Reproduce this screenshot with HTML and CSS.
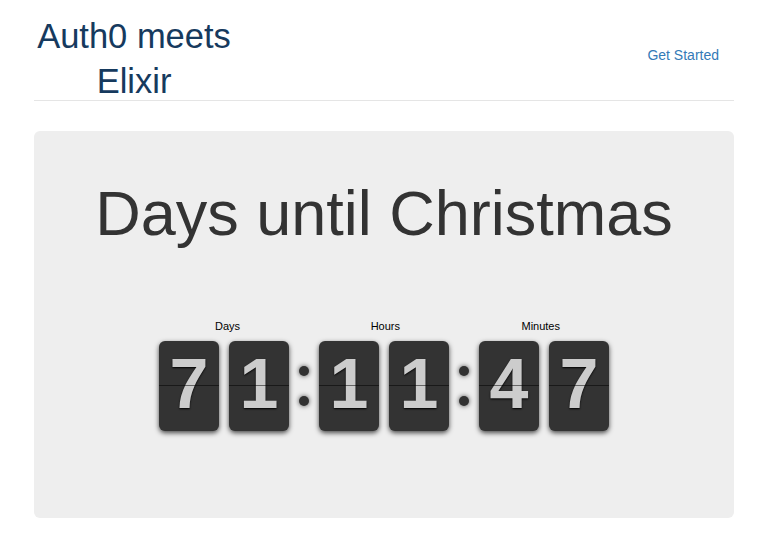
FILE: index.html
```html
<!DOCTYPE html>
<html>
<head>
<meta charset="utf-8">
<title>Auth0 meets Elixir</title>
<link rel="stylesheet" href="styles.css">
</head>
<body>
<div class="container">
  <header class="header">
    <h3 class="brand">Auth0 meets Elixir</h3>
    <nav class="nav"><a class="nav-link" href="#">Get Started</a></nav>
  </header>
  <main class="jumbotron">
    <h1 class="title">Days until Christmas</h1>
    <div class="clock">
      <div class="group">
        <div class="label">Days</div>
        <div class="cards">
          <div class="card">7</div>
          <div class="card">1</div>
        </div>
      </div>
      <div class="divider"><span class="dot"></span><span class="dot"></span></div>
      <div class="group">
        <div class="label">Hours</div>
        <div class="cards">
          <div class="card">1</div>
          <div class="card">1</div>
        </div>
      </div>
      <div class="divider"><span class="dot"></span><span class="dot"></span></div>
      <div class="group">
        <div class="label">Minutes</div>
        <div class="cards">
          <div class="card">4</div>
          <div class="card">7</div>
        </div>
      </div>
    </div>
  </main>
</div>
</body>
</html>
```
FILE: styles.css
```css
html, body {
  margin: 0;
  padding: 0;
  background: #fff;
  font-family: "Liberation Sans", Arial, sans-serif;
  color: #333;
}

.container {
  width: 700px;
  margin: 0 auto;
}

.header {
  display: flex;
  justify-content: space-between;
  align-items: flex-start;
  height: 86px;
  padding-top: 14px;
  border-bottom: 1px solid #e5e5e5;
}

.brand {
  margin: 0;
  width: 200px;
  text-align: center;
  font-size: 34.5px;
  font-weight: normal;
  line-height: 45px;
  color: #163a5e;
}

.nav {
  margin-top: 21px;
}

.nav-link {
  display: block;
  padding: 10px 15px;
  font-size: 14px;
  line-height: 20px;
  color: #337ab7;
  text-decoration: none;
}

.jumbotron {
  margin-top: 30px;
  padding: 48px 0 82px;
  background: #eee;
  border-radius: 6px;
}

.title {
  margin: 0;
  text-align: center;
  font-size: 63px;
  font-weight: normal;
  line-height: 69px;
  color: #333;
}

.clock {
  margin-top: 72px;
  display: flex;
  justify-content: center;
}

.group {
  width: 140px;
}

.label {
  width: 86px;
  height: 16px;
  text-align: right;
  font-size: 11px;
  line-height: 13px;
  color: #000;
}

.cards {
  display: flex;
  padding: 5px 0;
}

.card {
  position: relative;
  width: 60px;
  height: 90px;
  margin: 0 5px;
  background: #333;
  border-radius: 6px;
  box-shadow: 0 2px 5px rgba(0, 0, 0, 0.7);
  text-align: center;
  font-size: 70px;
  font-weight: bold;
  line-height: 87px;
  color: #ccc;
  text-shadow: 0 1px 2px #000;
}

.card::after {
  content: "";
  position: absolute;
  left: 0;
  right: 0;
  top: 44px;
  height: 1px;
  background: rgba(0, 0, 0, 0.5);
}

.divider {
  width: 20px;
  margin-top: 16px;
  padding-top: 30px;
  display: flex;
  flex-direction: column;
  align-items: center;
  gap: 20px;
}

.dot {
  display: block;
  width: 10px;
  height: 10px;
  border-radius: 50%;
  background: #323232;
  box-shadow: 0 0 5px rgba(0, 0, 0, 0.7);
}
```
